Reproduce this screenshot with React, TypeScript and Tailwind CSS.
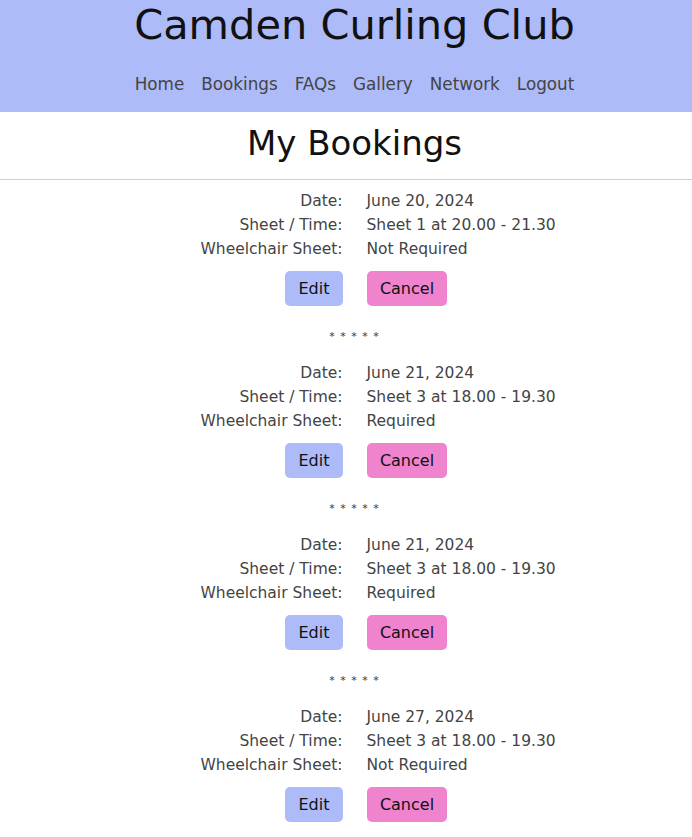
const bookings = [
  { date: "June 20, 2024", sheet: "Sheet 1 at 20.00 - 21.30", wheelchair: "Not Required" },
  { date: "June 21, 2024", sheet: "Sheet 3 at 18.00 - 19.30", wheelchair: "Required" },
  { date: "June 21, 2024", sheet: "Sheet 3 at 18.00 - 19.30", wheelchair: "Required" },
  { date: "June 27, 2024", sheet: "Sheet 3 at 18.00 - 19.30", wheelchair: "Not Required" },
];

const links = ["Home", "Bookings", "FAQs", "Gallery", "Network", "Logout"];

export default function App() {
  return (
    <div className="min-h-screen bg-white font-['DejaVu_Sans',sans-serif] text-[#222]">
      <header className="flex h-[112px] flex-col items-center bg-[#adbbf9] pl-[17px]">
        <h1 className="text-[41.5px] leading-[50px] text-[#111]">Camden Curling Club</h1>
        <nav className="mt-[22px] flex gap-[17px] text-[16.8px] leading-6 text-[#444]">
          {links.map((l) => (
            <a key={l} href="#">{l}</a>
          ))}
        </nav>
      </header>

      <h2 className="pt-[12px] pb-[17px] pl-[17px] text-center text-[34px] leading-[38px] text-[#111]">My Bookings</h2>
      <hr className="border-t border-[#cfcfcf]" />

      <main className="pt-[9px] pl-[17px]">
        {bookings.map((b, i) => (
          <div key={i}>
            <div className="grid grid-cols-2 text-[15.5px] leading-6 text-[#444]">
              <span className="pr-[12px] text-right">Date:</span>
              <span className="pl-[12px]">{b.date}</span>
              <span className="pr-[12px] text-right">Sheet / Time:</span>
              <span className="pl-[12px]">{b.sheet}</span>
              <span className="pr-[12px] text-right">Wheelchair Sheet:</span>
              <span className="pl-[12px]">{b.wheelchair}</span>
            </div>
            <div className="mt-[10px] flex justify-center gap-6 pl-[23px]">
              <button className="h-[35px] w-[58px] rounded-[5px] bg-[#adbbf9] text-[16px] text-[#111]">Edit</button>
              <button className="h-[35px] w-[80px] rounded-[5px] bg-[#ef83cd] text-[16px] text-[#111]">Cancel</button>
            </div>
            {i < bookings.length - 1 && (
              <p className="pt-[23px] pb-[16px] text-center text-[11px] leading-4 tracking-[1px] text-[#333]">* * * * *</p>
            )}
          </div>
        ))}
      </main>
    </div>
  );
}
